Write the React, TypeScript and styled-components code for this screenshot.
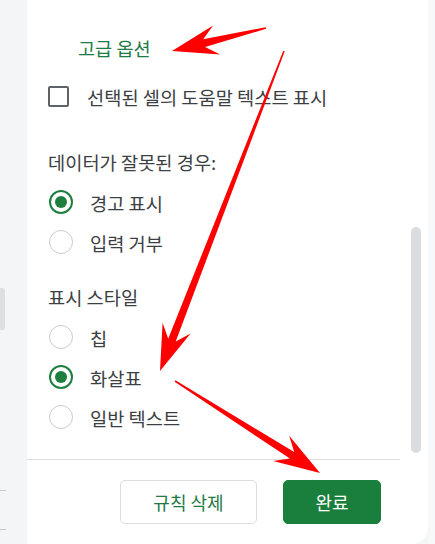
import styled, { createGlobalStyle } from 'styled-components';

const GlobalStyle = createGlobalStyle`
  html, body {
    margin: 0;
    padding: 0;
    background: #f5f6f7;
  }
  body {
    font-family: 'Noto Sans CJK KR', 'Noto Sans', sans-serif;
  }
`;

const Page = styled.div`
  position: relative;
  display: flex;
  width: 435px;
  height: 544px;
  overflow: hidden;
`;

const SideStrip = styled.div`
  width: 27px;
  display: flex;
  flex-direction: column;
  background: #f4f5f6;
`;

const SideBlock = styled.div`
  margin-top: 288px;
  width: 5px;
  height: 42px;
  background: #dedfe1;
  border-radius: 0 3px 3px 0;
`;

const SideLines = styled.div`
  margin-top: 160px;
  width: 6px;
  height: 38px;
  border-top: 1px solid #c8c9cb;
  border-bottom: 1px solid #c8c9cb;
`;

const Panel = styled.div`
  width: 401px;
  display: flex;
  flex-direction: column;
  background: #fff;
  border-radius: 0 0 16px 0;
`;

const RightStrip = styled.div`
  flex: 1;
  background: #f7f8fa;
`;

const ScrollArea = styled.div`
  display: flex;
  height: 459px;
`;

const Content = styled.div`
  flex: 1;
  padding: 36px 0 0 21px;
`;

const ScrollTrack = styled.div`
  width: 10px;
  margin-right: 7px;
  padding-top: 227px;
`;

const ScrollThumb = styled.div`
  height: 226px;
  background: #dadce0;
  border-radius: 5px;
`;

const Heading = styled.div`
  height: 24px;
  line-height: 24px;
  padding-left: 30px;
  font-size: 18.6px;
  color: #1e7b43;
`;

const Row = styled.label<{ $gap?: number }>`
  display: flex;
  align-items: center;
  height: 40px;
  margin-top: ${(p) => p.$gap ?? 0}px;
  font-size: 18.7px;
  color: #3c4043;
`;

const CheckBox = styled.span`
  box-sizing: border-box;
  width: 21px;
  height: 21px;
  border: 2px solid #5f6368;
  border-radius: 2px;
  margin-right: 18px;
`;

const Radio = styled.span<{ $on?: boolean }>`
  box-sizing: border-box;
  width: 24px;
  height: 24px;
  border-radius: 50%;
  margin: 0 17px 0 1px;
  border: ${(p) => (p.$on ? '2px solid #1e7e3e' : '1px solid #c9cbcd')};
  display: flex;
  align-items: center;
  justify-content: center;
  &::after {
    content: '';
    display: ${(p) => (p.$on ? 'block' : 'none')};
    width: 12px;
    height: 12px;
    border-radius: 50%;
    background: #1e7e3e;
  }
`;

const Label = styled.div<{ $gap: number }>`
  height: 24px;
  line-height: 24px;
  margin-top: ${(p) => p.$gap}px;
  margin-bottom: 8px;
  font-size: 18.7px;
  color: #3c4043;
`;

const Divider = styled.div`
  height: 1px;
  margin-right: 28px;
  background: #dadce0;
`;

const Footer = styled.div`
  display: flex;
  justify-content: flex-end;
  gap: 26px;
  padding: 20px 47px 0 0;
`;

const Button = styled.button<{ $primary?: boolean }>`
  box-sizing: border-box;
  height: 44px;
  width: ${(p) => (p.$primary ? 98 : 137)}px;
  border-radius: 5px;
  font-family: inherit;
  font-size: 18px;
  border: 1px solid ${(p) => (p.$primary ? '#1a7f3c' : '#dadce0')};
  background: ${(p) => (p.$primary ? '#1a7f3c' : '#fff')};
  color: ${(p) => (p.$primary ? '#fff' : '#1e7b43')};
`;

const Overlay = styled.svg`
  position: absolute;
  left: 0;
  top: 0;
  pointer-events: none;
`;

type Pt = [number, number];

// tapered annotation arrow, tail -> tip
const arrowPoints = (t: Pt, p: Pt, w0: number, w1: number, len: number, half: number) => {
  const dx = p[0] - t[0];
  const dy = p[1] - t[1];
  const d = Math.hypot(dx, dy);
  const ux = dx / d;
  const uy = dy / d;
  const nx = -uy;
  const ny = ux;
  const at = (k: number, w: number): string =>
    `${(p[0] - ux * k + nx * w).toFixed(1)},${(p[1] - uy * k + ny * w).toFixed(1)}`;
  return [
    `${(t[0] + nx * w0).toFixed(1)},${(t[1] + ny * w0).toFixed(1)}`,
    at(len * 0.72, w1),
    at(len, half),
    `${p[0]},${p[1]}`,
    at(len, -half),
    at(len * 0.72, -w1),
    `${(t[0] - nx * w0).toFixed(1)},${(t[1] - ny * w0).toFixed(1)}`,
  ].join(' ');
};

const arrows: [Pt, Pt][] = [
  [[266, 28], [172, 51]],
  [[284, 51], [160, 371]],
  [[175, 381], [320, 473]],
];

const App = () => {
  return (
    <>
      <GlobalStyle />
      <Page>
        <SideStrip>
          <SideBlock />
          <SideLines />
        </SideStrip>
        <Panel>
          <ScrollArea>
            <Content>
              <Heading>고급 옵션</Heading>
              <Row $gap={16}>
                <CheckBox />
                선택된 셀의 도움말 텍스트 표시
              </Row>
              <Label $gap={34}>데이터가 잘못된 경우:</Label>
              <Row>
                <Radio $on />
                경고 표시
              </Row>
              <Row>
                <Radio />
                입력 거부
              </Row>
              <Label $gap={23}>표시 스타일</Label>
              <Row>
                <Radio />
                칩
              </Row>
              <Row>
                <Radio $on />
                화살표
              </Row>
              <Row>
                <Radio />
                일반 텍스트
              </Row>
            </Content>
            <ScrollTrack>
              <ScrollThumb />
            </ScrollTrack>
          </ScrollArea>
          <Divider />
          <Footer>
            <Button>규칙 삭제</Button>
            <Button $primary>완료</Button>
          </Footer>
        </Panel>
        <RightStrip />
        <Overlay width={435} height={544}>
          {arrows.map(([t, p], i) => (
            <polygon key={i} points={arrowPoints(t, p, 0.8, 4, 46, 15)} fill="#ff0000" />
          ))}
        </Overlay>
      </Page>
    </>
  );
};

export default App;
